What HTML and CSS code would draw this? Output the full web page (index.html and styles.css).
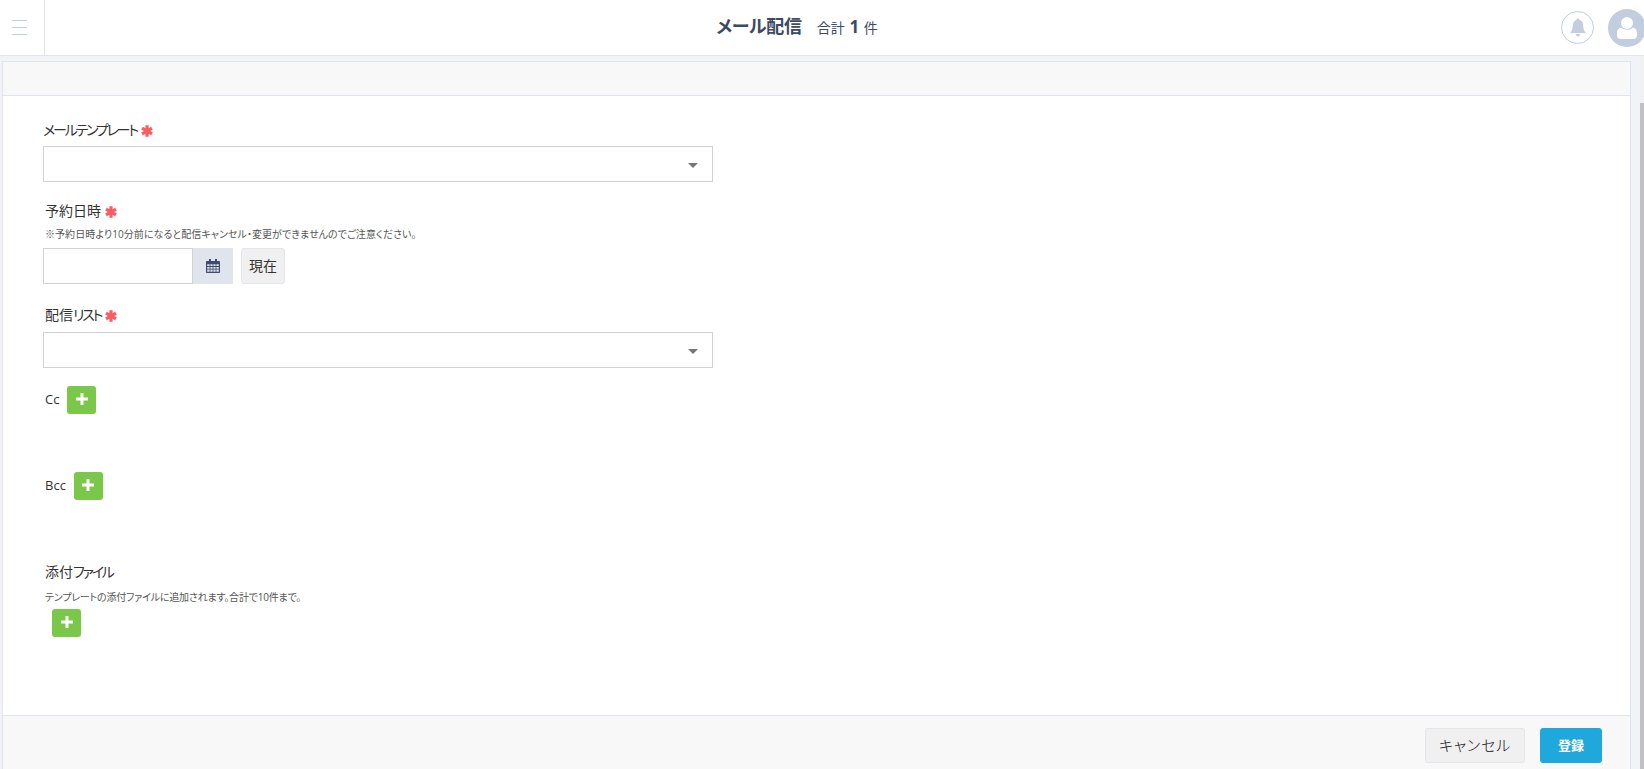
FILE: index.html
```html
<!DOCTYPE html>
<html lang="ja">
<head>
<meta charset="utf-8">
<title>メール配信</title>
<link rel="stylesheet" href="styles.css">
</head>
<body>
<header class="topbar">
  <div class="toggle">
    <svg width="15" height="15" viewBox="0 0 15 15" class="toggle-icon"><path d="M0 .5h15M0 7.500h15M0 14.500h15" stroke="#c2cde0" stroke-width="1" fill="none"/></svg>
  </div>
  <div class="title-area">
    <h1 class="title">メール配信</h1>
    <span class="count">合計 <b class="count-num">1</b> 件</span>
  </div>
  <div class="top-actions">
    <div class="bell">
      <svg width="20" height="20" viewBox="0 0 20 20"><path d="M10 .5c-.9 0-1.500.6-1.500 1.400C5.900 2.600 4.800 4.800 4.800 7.500c0 3.300-.8 5.200-2.300 6.700v.8h15v-.8c-1.500-1.500-2.300-3.400-2.300-6.700 0-2.700-1.100-4.900-3.700-5.600 0-.8-.6-1.400-1.500-1.400zM7.800 16c0 1.500 1 2.500 2.200 2.500s2.200-1 2.200-2.500z" fill="#c2cde0"/></svg>
    </div>
    <div class="avatar">
      <svg width="20" height="22" viewBox="0 0 20 22"><circle cx="10" cy="6" r="6" fill="#fff"/><path d="M4 10.500c1.500 1.500 3.500 2.200 6 2.200s4.500-.7 6-2.200c2.500.6 4 2.600 4 5.500v2.500c0 2-1.500 3.500-3.500 3.500h-13C1.500 22 0 20.500 0 18.500V16c0-2.900 1.500-4.900 4-5.500z" fill="#fff"/></svg>
    </div>
  </div>
</header>
<main class="page">
  <section class="panel">
    <div class="panel-head"></div>
    <form class="panel-body">
      <div class="field field-template">
        <label class="label label-flush"><span class="kana">メールテンプレート</span><svg class="req" width="12" height="12" viewBox="0 0 12 12"><path d="M6 .3v11.400M1 3.100l10 5.800M11 3.100l-10 5.800" stroke="#ff5a5f" stroke-width="3.200" fill="none"/></svg></label>
        <div class="select"><i class="caret"></i></div>
      </div>
      <div class="field field-date">
        <label class="label">予約日時<svg class="req" width="12" height="12" viewBox="0 0 12 12"><path d="M6 .3v11.400M1 3.100l10 5.800M11 3.100l-10 5.800" stroke="#ff5a5f" stroke-width="3.200" fill="none"/></svg></label>
        <p class="note note-date">※予約日時より10分前になると配信キャンセル・変更ができませんのでご注意ください。</p>
        <div class="date-row">
          <div class="date-input"></div>
          <div class="date-addon">
            <svg width="14" height="14" viewBox="0 0 14 14"><path d="M3 0h2v2h4V0h2v2h2.200c.4 0 .8.400.8.800v10.400c0 .4-.4.800-.8.800H.8c-.4 0-.8-.4-.8-.8V2.800C0 2.400.4 2 .8 2H3z" fill="#3d4d6b"/><path d="M1.200 5.200h2.400v1.900H1.200zM4.400 5.200h2.200v1.900H4.400zM7.400 5.200h2.200v1.900H7.400zM10.400 5.200h2.400v1.900h-2.400zM1.200 7.900h2.400v1.900H1.200zM4.400 7.900h2.200v1.900H4.400zM7.400 7.900h2.200v1.900H7.400zM10.400 7.900h2.400v1.900h-2.400zM1.200 10.600h2.400v2.200H1.200zM4.400 10.600h2.200v2.200H4.400zM7.400 10.600h2.200v2.200H7.400zM10.400 10.600h2.400v2.200h-2.400z" fill="#dfe4ec"/></svg>
          </div>
          <button type="button" class="btn btn-now">現在</button>
        </div>
      </div>
      <div class="field field-list">
        <label class="label">配信<span class="kana">リスト</span><svg class="req" width="12" height="12" viewBox="0 0 12 12"><path d="M6 .3v11.400M1 3.100l10 5.800M11 3.100l-10 5.800" stroke="#ff5a5f" stroke-width="3.200" fill="none"/></svg></label>
        <div class="select"><i class="caret"></i></div>
      </div>
      <div class="field field-cc">
        <label class="label label-inline">Cc</label>
        <button type="button" class="add"><svg width="12" height="12" viewBox="0 0 12 12"><path d="M4.500 0h3v4.500H12v3H7.500V12h-3V7.500H0v-3h4.500z" fill="#fff"/></svg></button>
      </div>
      <div class="field field-bcc">
        <label class="label label-inline">Bcc</label>
        <button type="button" class="add"><svg width="12" height="12" viewBox="0 0 12 12"><path d="M4.500 0h3v4.500H12v3H7.500V12h-3V7.500H0v-3h4.500z" fill="#fff"/></svg></button>
      </div>
      <div class="field field-attach">
        <label class="label">添付<span class="kana">ファイル</span></label>
        <p class="note note-attach">テンプレートの添付ファイルに追加されます。合計で10件まで。</p>
        <button type="button" class="add add-attach"><svg width="12" height="12" viewBox="0 0 12 12"><path d="M4.500 0h3v4.500H12v3H7.500V12h-3V7.500H0v-3h4.500z" fill="#fff"/></svg></button>
      </div>
    </form>
    <footer class="panel-foot">
      <button type="button" class="btn btn-cancel">キャンセル</button>
      <button type="button" class="btn btn-save">登録</button>
    </footer>
  </section>
  <div class="scrollbar"><div class="thumb"></div></div>
</main>
</body>
</html>
```
FILE: styles.css
```css
* { box-sizing: border-box; }
html, body { margin: 0; height: 100%; overflow: hidden; }
body {
  display: flex;
  flex-direction: column;
  background: #f1f3f7;
  color: #333;
  font-family: "Open Sans", "Noto Sans CJK JP", sans-serif;
  font-size: 13px;
  font-feature-settings: "palt";
}
.topbar {
  display: flex;
  flex: 0 0 56px;
  align-items: stretch;
  background: #fff;
  border-bottom: 1px solid #e0e4ec;
}
.toggle {
  flex: 0 0 45px;
  display: flex;
  align-items: center;
  padding-left: 12px;
  padding-bottom: 1px;
  border-right: 1px solid #e0e4ec;
}
.toggle-icon { display: block; }
.title-area {
  flex: 1;
  display: flex;
  align-items: center;
  justify-content: center;
  gap: 15px;
  padding-right: 10px;
  padding-bottom: 2px;
  color: #3d4a63;
}
.title { margin: 0; font-size: 18px; font-weight: 700; line-height: 1.2; letter-spacing: -.3px; }
.count { font-size: 14px; word-spacing: 1px; }
.count-num { font-size: 17px; font-weight: 700; }
.top-actions {
  flex: 0 0 85px;
  display: flex;
  align-items: center;
  gap: 14px;
  padding-left: 2px;
  overflow: hidden;
}
.bell {
  flex: 0 0 33px;
  height: 33px;
  display: flex;
  align-items: center;
  justify-content: center;
  border: 1px solid #c2cde0;
  border-radius: 50%;
}
.avatar {
  flex: 0 0 38px;
  height: 38px;
  display: flex;
  align-items: center;
  justify-content: center;
  border-radius: 50%;
  background: #c2cde0;
}
.page {
  flex: 1;
  min-height: 0;
  position: relative;
  padding: 5px 13px 0 2px;
}
.panel {
  height: 100%;
  display: flex;
  flex-direction: column;
  background: #fff;
  border: 1px solid #e0e4ec;
  border-bottom: 0;
}
.panel-head {
  flex: 0 0 34px;
  background: #f8f8f9;
  border-bottom: 1px solid #e1e3ef;
}
.panel-body { flex: 1; min-height: 0; padding: 0 0 0 40px; }
.panel-foot {
  flex: 0 0 54px;
  display: flex;
  justify-content: flex-end;
  gap: 15px;
  padding: 12px 28px 0 0;
  background: #f8f8f9;
  border-top: 1px solid #e1e3ef;
}
.field { margin: 0; }
.field-template { padding-top: 24px; }
.field-date { padding-top: 19px; }
.field-list { padding-top: 21px; }
.field-cc { display: flex; align-items: center; height: 28px; margin-top: 18px; }
.field-bcc { display: flex; align-items: center; height: 28px; margin-top: 58px; }
.field-attach { margin-top: 62px; }
.label {
  display: block;
  height: 20px;
  padding-left: 2px;
  font-size: 14px;
  line-height: 20px;
  color: #333;
}
.kana { letter-spacing: -2.200px; }
.label-flush { padding-left: 0; }
.label-inline { margin-right: 8px; height: 28px; font-size: 13px; line-height: 26px; }
.req { display: inline-block; margin-left: 4px; vertical-align: -2px; }
.select {
  position: relative;
  width: 670px;
  height: 36px;
  margin-top: 6px;
  border: 1px solid #d2d2d2;
  background: #fff;
}
.field-list .select { margin-top: 7px; }
.caret {
  position: absolute;
  right: 14px;
  top: 16px;
  border-style: solid;
  border-width: 5px 5px 0;
  border-color: #777 transparent transparent;
}
.note {
  margin: 0;
  padding-left: 2px;
  font-size: 10px;
  line-height: 16px;
  color: #555;
}
.note-date { margin-top: 5px; letter-spacing: .05px; }
.note-attach { margin-top: 7px; letter-spacing: -.2px; }
.date-row { display: flex; margin-top: 6px; height: 36px; }
.date-input { width: 150px; border: 1px solid #d2d2d2; background: #fff; }
.date-addon {
  width: 40px;
  display: flex;
  align-items: center;
  justify-content: center;
  background: #e0e4ec;
}
.btn {
  border: 1px solid #e3e5ec;
  border-radius: 3px;
  background: #f0f0f0;
  color: #333;
  font-family: inherit;
  font-feature-settings: inherit;
  padding: 0 0 2px;
}
.btn-now { width: 44px; margin-left: 8px; font-size: 14px; }
.btn-cancel { width: 100px; height: 35px; color: #111; font-size: 15px; letter-spacing: .8px; font-weight: 300; }
.btn-save {
  width: 62px;
  height: 35px;
  background: #1fa8db;
  border-color: #1fa8db;
  color: #fff;
  font-size: 13px;
  font-weight: 700;
}
.add {
  display: flex;
  align-items: center;
  justify-content: center;
  width: 29px;
  height: 28px;
  padding: 0 0 2px;
  border: 0;
  border-radius: 3px;
  background: #7ac74a;
}
.add-attach { margin: 4px 0 0 9px; }
.scrollbar {
  position: absolute;
  top: 0;
  right: 0;
  bottom: 0;
  width: 4px;
  padding-top: 47px;
  background: #f1f1f1;
  overflow: hidden;
}
.thumb { height: 100%; background: #c1c1c1; }
```
